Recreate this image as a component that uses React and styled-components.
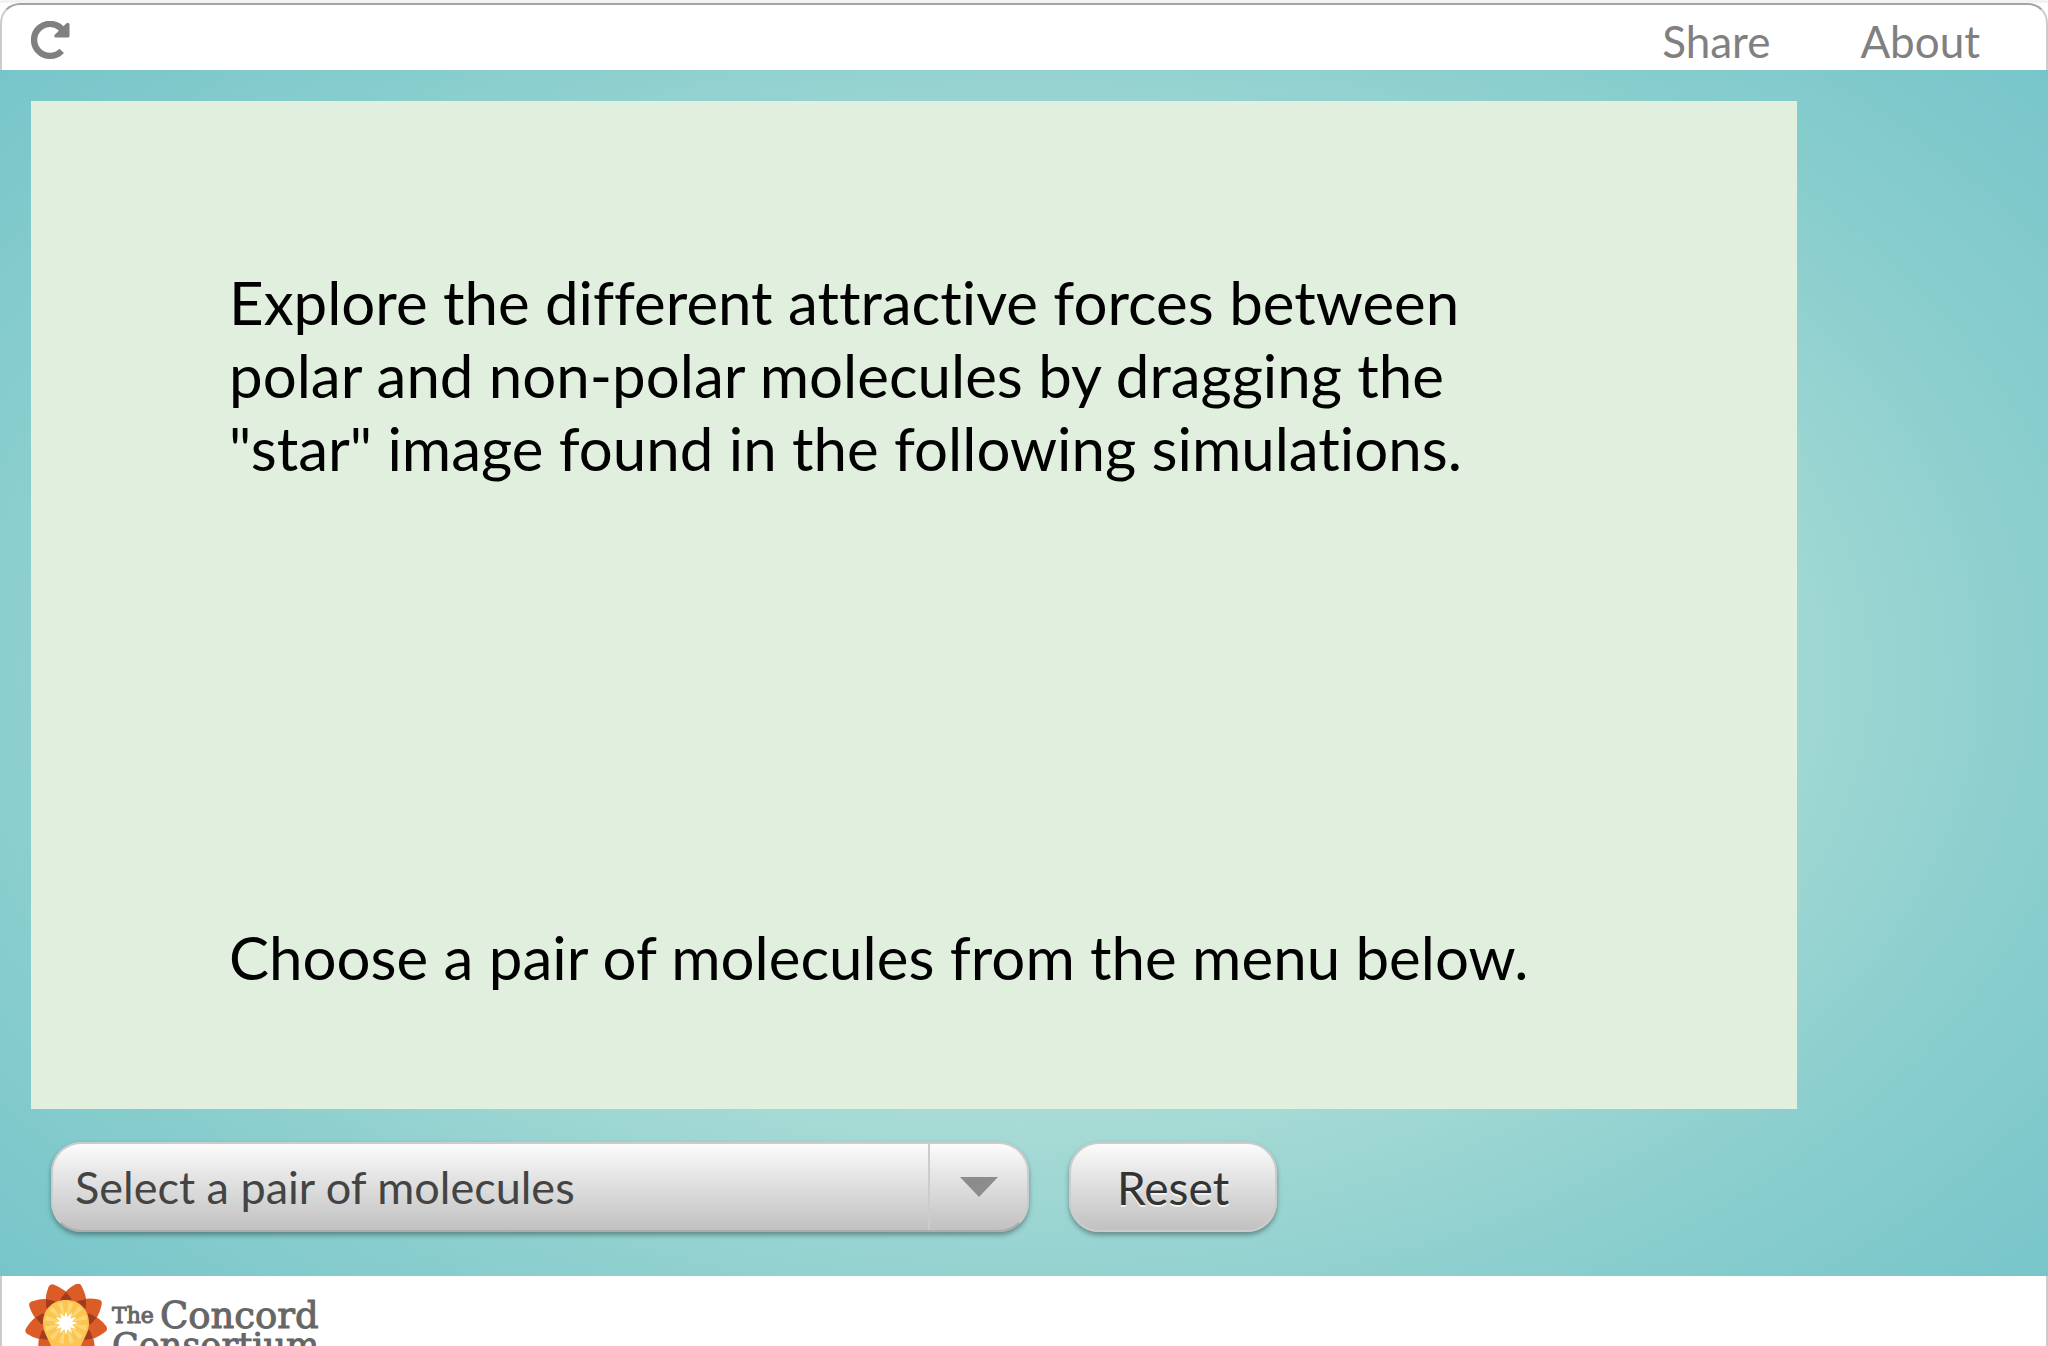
import React from "react";
import styled, { createGlobalStyle } from "styled-components";

const Global = createGlobalStyle`
  *, *::before, *::after { box-sizing: border-box; }
  body {
    margin: 0;
    font-family: Lato, "Liberation Sans", sans-serif;
    font-variant-ligatures: no-common-ligatures;
  }
`;

const Page = styled.div`
  display: flex;
  flex-direction: column;
  height: 100vh;
  overflow: hidden;
  border-top: 3px solid #f3f3f5;
  background: #fff;
`;

const Header = styled.header`
  display: flex;
  align-items: center;
  justify-content: space-between;
  height: 67px;
  flex: none;
  padding: 7px 66px 0 29px;
  background: #fff;
  border: 2px solid #ccc;
  border-top-color: #a4a4a4;
  border-bottom: 0;
  border-radius: 20px 20px 0 0;
`;

const ReloadButton = styled.button`
  display: flex;
  padding: 0;
  border: 0;
  background: none;
  color: #808080;
`;

const Nav = styled.nav`
  display: flex;
  gap: 90px;
`;

const NavLink = styled.a`
  color: #808080;
  font-size: 44px;
  line-height: 54px;
  text-decoration: none;
`;

const Model = styled.main`
  display: flex;
  flex: 1;
  flex-direction: column;
  gap: 33px;
  padding: 31px 251px 44px 31px;
  background: radial-gradient(ellipse farthest-corner at center, #dff2e5 0%, #8ccfce 70%, #73c3c9 100%) fixed;
`;

const Stage = styled.section`
  display: flex;
  flex: 1;
  flex-direction: column;
  justify-content: space-between;
  padding: 165px 198px 115px;
  background: #e1efde;
`;

const Message = styled.p`
  max-width: 1300px;
  margin: 0;
  color: #000;
  font-size: 60px;
  line-height: 73px;
`;

const Controls = styled.form`
  display: flex;
  gap: 40px;
  padding-left: 20px;
`;

const raised = `
  height: 90px;
  border: 2px solid #ccc;
  border-radius: 30px;
  background: linear-gradient(#fcfcfc, #e9e9e9 30%, #c1c1c1);
  box-shadow: 0 3px 5px rgba(0, 0, 0, 0.35);
  font-family: inherit;
  font-size: 46px;
`;

const Picker = styled.label`
  ${raised}
  position: relative;
  display: flex;
  flex: 0 1 978px;
  border-bottom-color: #adadad;
  font-size: 45px;
`;

const Select = styled.select`
  width: 100%;
  padding: 0 100px 0 22px;
  border: 0;
  appearance: none;
  background: none;
  color: #444;
  font: inherit;
  font-variant-ligatures: inherit;
`;

const PickerArrow = styled.span`
  position: absolute;
  inset: 0 0 0 auto;
  display: flex;
  align-items: center;
  justify-content: center;
  width: 99px;
  border-left: 2px solid #ccc;
  pointer-events: none;
`;

const ResetButton = styled.button`
  ${raised}
  padding: 0 46px;
  color: #333;
  text-shadow: 0 2px 0 #f3f3f3;
`;

const Footer = styled.footer`
  height: 70px;
  flex: none;
  overflow: hidden;
  padding: 8px 23px;
  border: solid #ccc;
  border-width: 0 2px;
`;

const Logo = styled.a`
  display: flex;
  gap: 5px;
  color: #666;
  text-decoration: none;
`;

const LogoText = styled.span`
  padding-top: 16px;
  font-family: "DejaVu Serif", serif;
  -webkit-text-stroke: 1px #666;
`;

const LogoLine = styled.span`
  display: flex;
  align-items: ${(p) => (p.$small ? "center" : "baseline")};
  gap: 6px;
  font-size: ${(p) => p.$size}px;
  line-height: 31px;
  white-space: nowrap;
`;

const LogoSmall = styled.small`
  font-size: 22px;
`;

const petals = Array.from({ length: 9 }, (_, i) => i * 40 + 20);
const rays = Array.from({ length: 12 }, (_, i) => i * 30);

function Sunflower() {
  return (
    <svg width="82" height="90" viewBox="0 0 82 90" aria-hidden="true">
      {petals.map((a) => (
        <path key={a} transform={`rotate(${a} 41 39)`} fill="#dc5c28"
          d="M41 39L28 17Q29 8 37 -1Q40 -4 43 -1Q53 8 54 17Z" />
      ))}
      {petals.map((a) => (
        <path key={a} transform={`rotate(${a + 20} 41 39)`} fill="#a23c20"
          d="M41 8L46 14L47 20L41 30L35 20L36 14Z" />
      ))}
      <path fill="#fdc450" d="M41 16C27 16 18 26 18 39C18 51 26 56 29 72H53C56 56 64 51 64 39C64 26 55 16 41 16Z" />
      {rays.map((a) => (
        <path key={a} transform={`rotate(${a + 15} 41 39)`} fill="#f9d878" d="M41 36L38 18L43 18Z" />
      ))}
      {rays.map((a) => (
        <path key={a} transform={`rotate(${a} 41 39)`} fill="#fff" d="M38 38L41 27L44 38Z" />
      ))}
      <circle cx="41" cy="39" r="6" fill="#fff" />
    </svg>
  );
}

export default function App() {
  return (
    <>
      <Global />
      <Page>
        <Header>
          <ReloadButton type="button" aria-label="Reload">
            <svg width="40" height="40" viewBox="0 0 40 40" aria-hidden="true">
              <path d="M30.700 29.900A16 16 0 1 1 32 9.500" fill="none" stroke="currentColor" strokeWidth="6.400" />
              <path d="M38.500 3.500V15Q38.500 16.500 37 16.500H25Q22 16.500 24 13.500L35.500 2.200Q38 1 38.500 3.500Z" fill="currentColor" />
            </svg>
          </ReloadButton>
          <Nav>
            <NavLink href="#share">Share</NavLink>
            <NavLink href="#about">About</NavLink>
          </Nav>
        </Header>
        <Model>
          <Stage>
            <Message>
              Explore the different attractive forces between polar and non-polar molecules by
              dragging the "star" image found in the following simulations.
            </Message>
            <Message>Choose a pair of molecules from the menu below.</Message>
          </Stage>
          <Controls>
            <Picker>
              <Select aria-label="Pair of molecules">
                <option>Select a pair of molecules</option>
              </Select>
              <PickerArrow>
                <svg width="38" height="20" viewBox="0 0 38 20" aria-hidden="true">
                  <path d="M0 0H38L19 20Z" fill="#8c8c8c" />
                </svg>
              </PickerArrow>
            </Picker>
            <ResetButton type="button">Reset</ResetButton>
          </Controls>
        </Model>
        <Footer>
          <Logo href="#concord" aria-label="The Concord Consortium">
            <Sunflower />
            <LogoText>
              <LogoLine $size={37} $small><LogoSmall>The</LogoSmall> Concord</LogoLine>
              <LogoLine $size={35}>Consortium</LogoLine>
            </LogoText>
          </Logo>
        </Footer>
      </Page>
    </>
  );
}
